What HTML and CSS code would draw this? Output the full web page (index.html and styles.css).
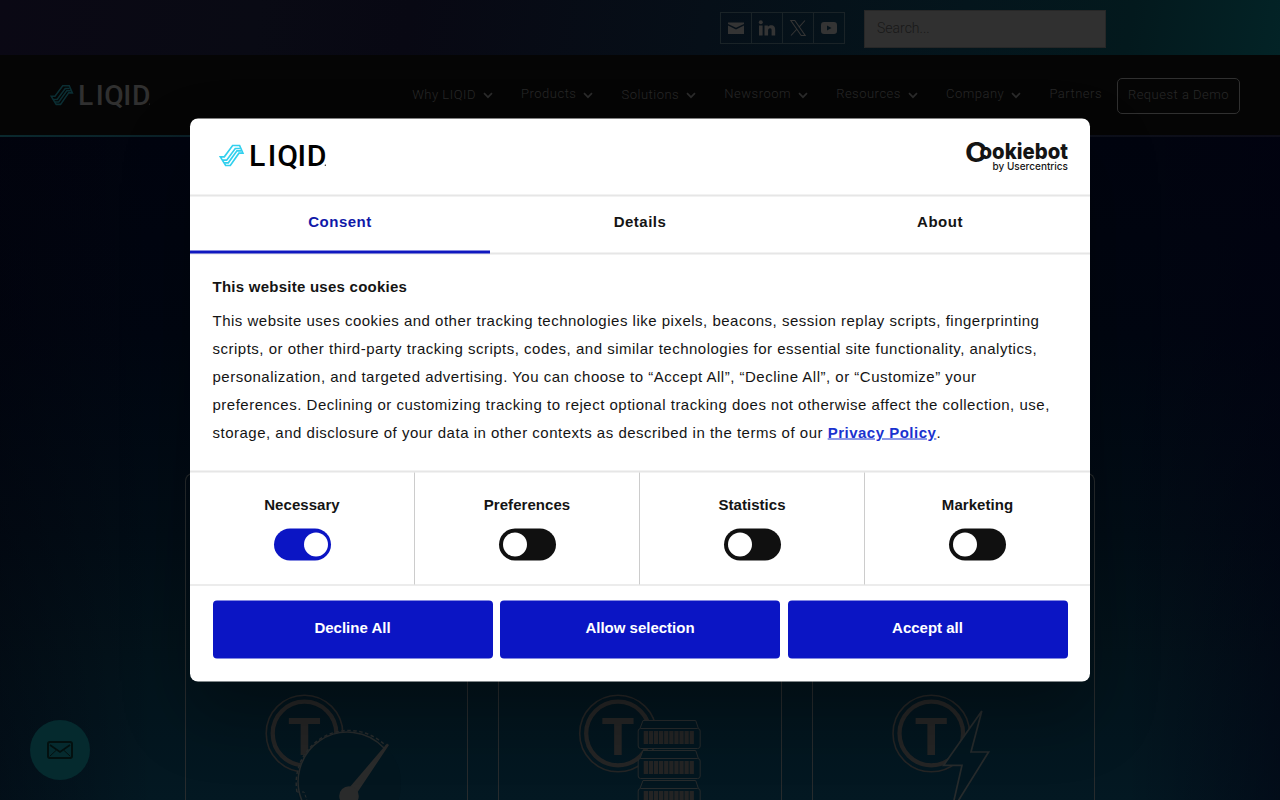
FILE: index.html
```html
<!DOCTYPE html>
<html lang="en">
  <head>
    <meta charset="utf-8" />
    <meta name="viewport" content="width=device-width, initial-scale=1.0" />
    <title>LIQID</title>
    <link rel="stylesheet" href="styles.css">
  </head>
  <body>
    <svg width="0" height="0" class="symbols">
      <symbol id="logo" viewBox="87 80 325 90">
        <g fill="none" stroke="var(--mark)" stroke-width="5">
          <path d="M91 126H103L128 92H149L159 115H147L121 152H107Z" />
          <path d="M97 136H110L136 101H150" />
          <path d="M102 144H115L141 108H154" />
        </g>
        <text class="logo-text" x="177 234 262 323 351" y="154">LIQID</text>
        <circle cx="407" cy="151" r="2" fill="currentColor" />
      </symbol>
      <symbol id="chevron" viewBox="0 0 10 7">
        <path d="M1 1.2L5 5.2L9 1.2" fill="none" stroke="currentColor" stroke-width="1.7" />
      </symbol>
    </svg>

    <div class="topbar">
      <div class="social">
        <a href="#"><svg width="18" height="18" viewBox="0 0 18 18"><path d="M1 3.500h16v1.500L9 8.800 1 5z M1 6.500l8 4 8-4V15H1z" fill="currentColor" /></svg></a>
        <a href="#"><svg width="18" height="18" viewBox="0 0 18 18"><path d="M1 6.500h3.600V16.500H1z M6.500 6.500h3.400v1.300c.6-1 1.700-1.600 3.100-1.600 3.200 0 4.200 1.800 4.200 4.700v5.600h-3.600v-5c0-1.400-.3-2.300-1.600-2.300-1.400 0-1.900 1-1.900 2.400v4.900H6.500z" fill="currentColor" /><circle cx="2.800" cy="3.300" r="2" fill="currentColor" /></svg></a>
        <a href="#"><svg width="18" height="18" viewBox="0 0 18 18"><path d="M1.800 1.500h4l10.400 15h-4z M16 1.500L9.800 8.400 M8 10L2 16.500" fill="none" stroke="currentColor" stroke-width="1.100" /></svg></a>
        <a href="#"><svg width="18" height="18" viewBox="0 0 18 18"><path fill-rule="evenodd" d="M4 3h10q3 0 3 3v6q0 3-3 3H4q-3 0-3-3V6q0-3 3-3z M7 6.500v5L11.500 9z" fill="currentColor" /></svg></a>
      </div>
      <div class="search">Search...</div>
    </div>

    <div class="navbar">
      <svg class="nav-logo" width="101" height="28"><use href="#logo" /></svg>
      <div class="menu">
        <a class="low" href="#">Why LIQID</a><svg class="chevron"><use href="#chevron" /></svg>
        <a href="#">Products</a><svg class="chevron"><use href="#chevron" /></svg>
        <a class="low" href="#">Solutions</a><svg class="chevron"><use href="#chevron" /></svg>
        <a href="#">Newsroom</a><svg class="chevron"><use href="#chevron" /></svg>
        <a href="#">Resources</a><svg class="chevron"><use href="#chevron" /></svg>
        <a href="#">Company</a><svg class="chevron"><use href="#chevron" /></svg>
        <a href="#">Partners</a>
        <a class="demo" href="#">Request a Demo</a>
      </div>
    </div>

    <div class="main">
      <div class="cards">
        <div class="card">
          <svg width="281" height="110" viewBox="186 690 281 110">
            <g class="token">
              <circle cx="304.500" cy="733.500" r="38.300" stroke-width="1.600" />
              <circle cx="304.500" cy="733.500" r="31.800" stroke-width="4.300" />
              <text x="304.500" y="755" text-anchor="middle">T</text>
            </g>
            <circle cx="349" cy="784" r="52" class="cutout" />
            <g class="line">
              <path d="M297 792A52.500 52.500 0 0 1 386 746" stroke-width="1.500" stroke-dasharray="3.500 2.500" />
              <path d="M303 803A49.500 49.500 0 0 1 384 748" stroke-width="1.500" />
              <path d="M297 792h7l3 8" stroke-dasharray="3 2" />
            </g>
            <path class="solid" d="M387 743.500L389 745 357 793 349 788z" />
            <circle class="solid" cx="349" cy="796" r="9.800" />
          </svg>
        </div>
        <div class="card">
          <svg width="281" height="110" viewBox="499.300 690 281 110">
            <g class="token">
              <circle cx="618.300" cy="733.500" r="38.300" stroke-width="1.600" />
              <circle cx="618.300" cy="733.500" r="31.800" stroke-width="4.300" />
              <text x="618.300" y="755" text-anchor="middle">T</text>
            </g>
            <g id="server">
              <path class="cutout line" d="M640.300 728.500L643.300 720.500H696L698.700 728.500" />
              <rect class="cutout line" x="638.500" y="728.500" width="62" height="20" rx="2.500" />
              <path d="M644 737.500H695" stroke="#242424" stroke-width="13" stroke-dasharray="4.300 0.800" />
            </g>
            <use href="#server" y="30" />
            <use href="#server" y="60" />
          </svg>
        </div>
        <div class="card">
          <svg width="281" height="110" viewBox="812.700 690 281 110">
            <g class="token">
              <circle cx="931" cy="733.500" r="38.300" stroke-width="1.600" />
              <circle cx="931" cy="733.500" r="31.800" stroke-width="4.300" />
              <text x="931" y="755" text-anchor="middle">T</text>
            </g>
            <path class="cutout line bolt" d="M981.500 711L970.700 752H988.300L951 812 961.700 765.300H943.300Z" />
          </svg>
        </div>
      </div>
    </div>

    <div class="contact">
      <svg width="26" height="18" viewBox="0 0 26 18" fill="none" stroke="#03100f">
        <rect x="1" y="1" width="24" height="16" rx="2" stroke-width="2" />
        <path d="M3 4L13 11 23 4" stroke-width="1.600" />
        <path d="M3 15L9.500 9M23 15L16.500 9" stroke-width="1" />
      </svg>
    </div>

    <div class="dialog">
      <div class="dialog-header">
        <svg class="dialog-logo" width="108" height="30"><use href="#logo" /></svg>
        <svg class="cookiebot" width="104" height="34" viewBox="965 139 104 34">
          <text class="cb-c" x="965" y="161.300" textLength="22" lengthAdjust="spacingAndGlyphs">C</text>
          <text class="cb-name" x="979.500" y="158.300" textLength="88.500" lengthAdjust="spacingAndGlyphs">ookiebot</text>
          <text class="cb-by" x="992.500" y="169" textLength="75.500" lengthAdjust="spacingAndGlyphs">by Usercentrics</text>
        </svg>
      </div>
      <div class="tabs">
        <div class="tab active">Consent</div>
        <div class="tab">Details</div>
        <div class="tab">About</div>
      </div>
      <div class="content">
        <h2>This website uses cookies</h2>
        <p>
          This website uses cookies and other tracking technologies like pixels, beacons, session replay scripts, fingerprinting
          scripts, or other third-party tracking scripts, codes, and similar technologies for essential site functionality, analytics,
          personalization, and targeted advertising. You can choose to “Accept All”, “Decline All”, or “Customize” your
          preferences. Declining or customizing tracking to reject optional tracking does not otherwise affect the collection, use,
          storage, and disclosure of your data in other contexts as described in the terms of our <a href="#">Privacy Policy</a>.
        </p>
      </div>
      <div class="options">
        <div class="option"><span>Necessary</span><div class="switch on"></div></div>
        <div class="option"><span>Preferences</span><div class="switch"></div></div>
        <div class="option"><span>Statistics</span><div class="switch"></div></div>
        <div class="option"><span>Marketing</span><div class="switch"></div></div>
      </div>
      <div class="actions">
        <button>Decline All</button>
        <button>Allow selection</button>
        <button>Accept all</button>
      </div>
    </div>
  </body>
</html>
```

FILE: styles.css
```css
* {
  box-sizing: border-box;
}

body {
  margin: 0;
  height: 800px;
  overflow: hidden;
  font-family: Roboto, sans-serif;
  font-weight: 300;
  background: #01040f;
}

a {
  color: inherit;
  text-decoration: none;
}

svg {
  display: block;
  flex: none;
}

.symbols {
  position: absolute;
}

.logo-text {
  font: 500 91px Roboto, sans-serif;
  letter-spacing: 0;
  fill: currentColor;
}

.topbar {
  display: flex;
  justify-content: flex-end;
  align-items: flex-start;
  gap: 19px;
  height: 55px;
  padding: 10px 174px 0 0;
  background: linear-gradient(100deg, #0a0814 0%, #090a14 20%, #080813 32%, #060f18 55%, #04151c 75%, #03191d 88%, #032326 100%);
}

.social {
  display: flex;
  margin-top: 2px;
  border: 1px solid #1a2327;
}

.social a {
  display: flex;
  align-items: center;
  justify-content: center;
  width: 31px;
  height: 30px;
  color: #343434;
  border-right: 1px solid #1a2327;
}

.social a:last-child {
  width: 30px;
  border-right: none;
}

.search {
  width: 242px;
  height: 38px;
  padding-left: 12px;
  border: 1px solid #272727;
  background: #303030;
  color: #181818;
  font-size: 14px;
  line-height: 35px;
}

.navbar {
  display: flex;
  align-items: flex-start;
  justify-content: space-between;
  height: 82px;
  padding: 23px 40px 0 49.500px;
  background: #050505;
  border-bottom: 2px solid;
  border-image: linear-gradient(90deg, #0a292e, #0b1a22 25%, #0d0d18) 1;
  color: #282828;
}

.nav-logo {
  --mark: #0b2e33;
  margin-top: 4px;
  color: #303030;
}

.menu {
  display: flex;
  font-size: 13px;
  line-height: 16px;
  letter-spacing: 0.5px;
}

.menu a {
  margin-top: 8px;
}

.menu a.low {
  margin-top: 9px;
}

.chevron {
  width: 10px;
  height: 7px;
  margin: 14px 28.300px 0 6.800px;
  color: #2b2b2b;
}

.menu .demo {
  width: 123px;
  height: 36px;
  margin: 0 0 0 15px;
  border: 1px solid #303030;
  border-radius: 5px;
  line-height: 32px;
  text-align: center;
}

.main {
  height: 663px;
  padding: 336px 185px 0;
  background:
    linear-gradient(90deg, rgba(2, 1, 10, 0.4), transparent 12%, transparent 88%, rgba(1, 1, 16, 0.5)),
    linear-gradient(180deg, #01040f 0%, #010611 30%, #020d16 60%, #03131b 78%, #031822 100%);
}

.cards {
  display: grid;
  grid-template-columns: repeat(3, 1fr);
  gap: 30px;
}

.card {
  height: 327px;
  padding-top: 216px;
  border: 1px solid #272b2d;
  border-bottom: none;
  border-radius: 8px 8px 0 0;
}

.token circle {
  fill: none;
  stroke: #252525;
}

.token text {
  font: bold 53px "Liberation Sans", sans-serif;
  fill: #252525;
}

.cutout {
  fill: #03161f;
}

.line {
  stroke: #272b2c;
}

g.line {
  fill: none;
}

.bolt {
  stroke-width: 1.7;
}

.solid {
  fill: #2a2b2b;
}

.contact {
  position: absolute;
  left: 30px;
  bottom: 20px;
  display: flex;
  align-items: center;
  justify-content: center;
  width: 60px;
  height: 60px;
  border-radius: 50%;
  background: #052a2e;
}

.dialog {
  position: absolute;
  top: 50%;
  left: 50%;
  width: 900px;
  height: 563px;
  transform: translate(-50%, -50%);
  border-radius: 8px;
  background: #fff;
  box-shadow: 0 32px 68px rgba(0, 0, 0, 0.3);
  color: #141414;
  font: 15px "Liberation Sans", Arial, sans-serif;
  letter-spacing: 0.5px;
}

.dialog-header {
  display: flex;
  justify-content: space-between;
  height: 78px;
  padding: 0 21px 0 29px;
  border-bottom: 2px solid #e6e6e6;
}

.dialog-logo {
  --mark: #32d0ee;
  margin-top: 23px;
  color: #000;
}

.cookiebot {
  margin-top: 20.500px;
  fill: #141414;
  letter-spacing: 0;
}

.cb-c {
  font: 700 26.500px Inter, sans-serif;
}

.cb-name {
  font: 800 22px Inter, sans-serif;
}

.cb-by {
  font: 500 10.500px Inter, sans-serif;
}

.tabs {
  display: flex;
  height: 58px;
  border-bottom: 2px solid #e6e6e6;
}

.tab {
  flex: 1;
  height: 57px;
  padding-top: 16px;
  font-weight: bold;
  text-align: center;
}

.tab.active {
  color: #1018a8;
  border-bottom: 3px solid #1018c0;
}

.content {
  height: 216px;
  padding: 23px 22.500px 0;
}

.content h2 {
  margin: 0 0 11px;
  font-size: 15px;
  line-height: 18px;
  letter-spacing: 0.25px;
}

.content p {
  margin: 0;
  line-height: 28px;
}

.content a {
  color: #1a32cf;
  font-weight: bold;
  text-decoration: underline;
}

.options {
  display: grid;
  grid-template-columns: repeat(4, 1fr);
  height: 114.500px;
  border-top: 2px solid #e6e6e6;
  border-bottom: 1px solid #d9d9d9;
}

.option {
  display: flex;
  flex-direction: column;
  align-items: center;
  gap: 16px;
  padding-top: 23px;
  border-right: 1px solid #ccc;
  font-weight: bold;
  letter-spacing: 0.05px;
}

.option:last-child {
  border-right: none;
}

.switch {
  width: 57px;
  height: 32px;
  padding: 4px;
  border-radius: 16px;
  background: #101010;
}

.switch::before {
  content: "";
  display: block;
  width: 24px;
  height: 24px;
  border-radius: 50%;
  background: #fff;
}

.switch.on {
  background: #0b15c4;
}

.switch.on::before {
  margin-left: 26px;
}

.actions {
  display: flex;
  gap: 7.500px;
  padding: 15.500px 22.500px;
}

button {
  flex: 1;
  height: 58px;
  padding: 0 0 6px;
  border: none;
  border-radius: 4px;
  background: #0b15c4;
  color: #fff;
  font: bold 15px "Liberation Sans", Arial, sans-serif;
}
```
